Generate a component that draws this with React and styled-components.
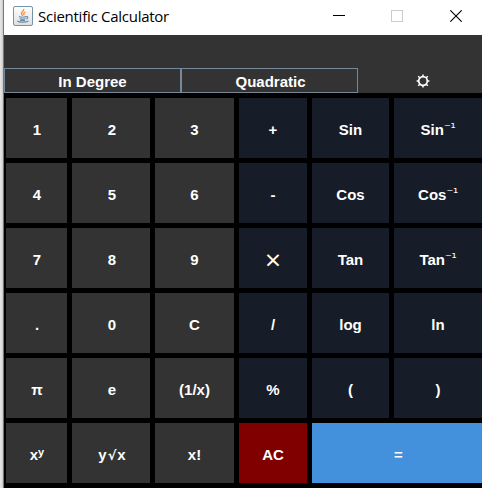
import React from "react";
import styled, { createGlobalStyle } from "styled-components";

const GlobalStyle = createGlobalStyle`
  * { box-sizing: border-box; }
  body { margin: 0; overflow: hidden; background: #000; }
`;

const Desktop = styled.div`
  display: flex;
  width: 482px;
  height: 488px;
  overflow: hidden;
  font-family: "Liberation Sans", Arial, sans-serif;
`;

const WindowEdge = styled.div`
  flex: none;
  width: 4px;
  background: linear-gradient(90deg, #e4e4e4 0 1px, #dcdcdc 1px 2px, #cfcfcf 2px 3px, #777 3px 4px);
`;

const Window = styled.main`
  flex: none;
  width: 478px;
  height: 488px;
  display: flex;
  flex-direction: column;
  background: #000;
`;

const TitleBar = styled.header`
  flex: none;
  height: 35px;
  display: flex;
  align-items: center;
  padding: 0 0 3px 9px;
  background: #fff;
  svg { display: block; flex: none; }
`;

const Title = styled.h1`
  margin: 0 auto 0 5px;
  font: 400 15px/20px "Open Sans", "Noto Sans", sans-serif;
  letter-spacing: -0.26px;
  color: #000;
  white-space: nowrap;
`;

const Controls = styled.div`
  display: flex;
  gap: 47px;
  margin-right: 20px;
  svg:first-child { margin-right: -1px; }
`;

const Display = styled.div`
  flex: none;
  height: 33px;
  background: #333;
`;

const Toolbar = styled.div`
  flex: none;
  height: 25px;
  display: grid;
  grid-template-columns: 177px 177px 124px;
  background: #333;
`;

const ButtonBase = styled.button`
  margin: 0;
  padding: 0;
  border: 0;
  display: flex;
  align-items: center;
  justify-content: center;
  font: 700 15px/17px "Liberation Sans", Arial, sans-serif;
  color: #fff;
  white-space: pre;
`;

const ModeButton = styled(ButtonBase)`
  background: #333;
  border: 1px solid #778899;
  padding: 2px 0 0 ${({ $shift }) => $shift || 0}px;
`;

const SettingsButton = styled(ButtonBase)`
  background: #333;
  padding: 1px 0 0 6px;
`;

const Keypad = styled.section`
  display: grid;
  grid-template-columns: 61px 78px 79px 68px 77px 88px;
  grid-auto-rows: 60px;
  gap: 5px;
  padding: 5px 0 5px 2px;
`;

const tones = { number: "#333333", operator: "#161d28", clear: "#800000", equals: "#4390dc" };

const Key = styled(ButtonBase)`
  grid-column: span ${({ $span }) => $span || 1};
  background: ${({ $tone }) => tones[$tone]};
  padding: 3px 0 0 ${({ $shift }) => $shift || 0}px;
`;

const Power = styled.span`
  font: 400 13px/15px "DejaVu Sans", sans-serif;
  letter-spacing: -0.3px;
  align-self: flex-start;
  margin: 19px 0 0 0;
`;

const Exponent = styled.span`
  font-size: 11px;
  font-weight: 700;
  line-height: 11px;
  margin-top: -4px;
`;

const Times = styled.span`
  font: 400 28px/17px "Open Sans", sans-serif;
  margin-top: -1px;
`;

const Radical = styled.span`
  font: 700 13px/17px "DejaVu Sans", sans-serif;
  margin: 2px 1px 0;
`;

const JavaIcon = () => (
  <svg width="20" height="20" viewBox="0 0 20 20" fill="none">
    <defs>
      <linearGradient id="tile" x2="0" y2="1">
        <stop stopColor="#fff" />
        <stop offset="1" stopColor="#dedede" />
      </linearGradient>
    </defs>
    <rect x=".5" y=".5" width="19" height="19" rx="1.5" fill="url(#tile)" stroke="#7793a8" />
    <path d="M10.6 3c1 2-3.1 2.8-2.1 4.8.3.7 1 1.2 1.1 2M12.5 6c-2 1-2.2 1.7-1.2 3.2" stroke="#ef9144" strokeWidth="1.3" />
    <path d="M6 10.6c2 .7 5 .7 7 0M6.7 12.6c2 .8 4 .8 5.8 0M13 10.7c2.5-.4 2 1.7.3 2.2M4.3 15c1.5 1.5 8.5 1.5 11.2 0M7 14.4h5" stroke="#668caa" strokeWidth="1.1" />
  </svg>
);

const GearIcon = () => (
  <svg width="14" height="14" viewBox="0 0 14 14" fill="none" stroke="#fff">
    <circle cx="7" cy="7" r="4.3" strokeWidth="1.7" />
    <path d="M7 .6v2M7 11.4v2M.6 7h2M11.4 7h2M2.2 2.2l1.6 1.6M10.2 10.2l1.6 1.6M2.2 11.8l1.6-1.6M10.2 3.8l1.6-1.6" strokeWidth="1.5" />
  </svg>
);

const inverse = (name) => <>{name}<Power>⁻¹</Power></>;

const keys = [
  ["1"], ["2"], ["3"], ["+"], ["Sin"], ["sin-1", inverse("Sin")],
  ["4"], ["5"], ["6"], ["-"], ["Cos"], ["cos-1", inverse("Cos")],
  ["7"], ["8"], ["9"], ["times", <Times>×</Times>], ["Tan"], ["tan-1", inverse("Tan")],
  ["."], ["0"], ["C"], ["/"], ["log"], ["ln"],
  ["π"], ["e"], ["(1/x)"], ["%"], ["("], [")"],
  ["power", <>x<Exponent>y</Exponent></>], ["root", <>y<Radical>√</Radical>x</>], ["x!"],
];

export default function App() {
  return (
    <Desktop>
      <GlobalStyle />
      <WindowEdge />
      <Window>
        <TitleBar>
          <JavaIcon />
          <Title>Scientific Calculator</Title>
          <Controls>
            <svg width="12" height="12" shapeRendering="crispEdges"><path d="M0 5.5h12" stroke="#000" /></svg>
            <svg width="12" height="12" shapeRendering="crispEdges"><rect x=".5" y=".5" width="11" height="11" fill="none" stroke="#ccc" /></svg>
            <svg width="12" height="12"><path d="M.3.3l11.4 11.4M11.7.3.3 11.7" stroke="#000" strokeWidth="1.1" /></svg>
          </Controls>
        </TitleBar>
        <Display />
        <Toolbar>
          <ModeButton>In Degree</ModeButton>
          <ModeButton $shift={2}>Quadratic</ModeButton>
          <SettingsButton aria-label="Settings"><GearIcon /></SettingsButton>
        </Toolbar>
        <Keypad>
          {keys.map(([id, label], i) => (
            <Key key={id} $tone={i % 6 < 3 ? "number" : "operator"} $shift={i % 6 < 2 ? 2 - (i % 6 === 0) : 0}>
              {label || id}
            </Key>
          ))}
          <Key $tone="clear">AC</Key>
          <Key $tone="equals" $span={2} $shift={3}>=</Key>
        </Keypad>
      </Window>
    </Desktop>
  );
}
